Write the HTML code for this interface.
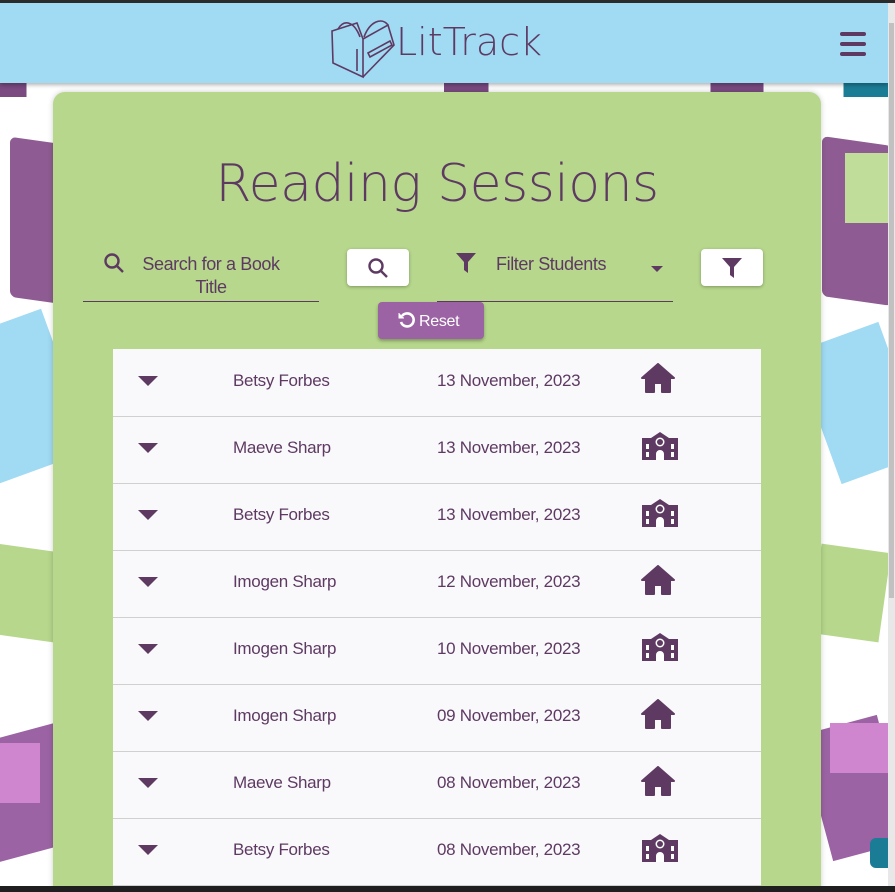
<!DOCTYPE html>
<html><head><style>
*{margin:0;padding:0;box-sizing:border-box}
body{width:895px;height:892px;overflow:hidden;background:#2b2b2b;font-family:"Liberation Sans",sans-serif;position:relative}
#page{position:absolute;left:0;top:3px;width:888px;height:883px;background:#fff;overflow:hidden}
#sb{position:absolute;left:888px;top:3px;width:7px;height:883px;background:#e8e8e8}
#sb div{position:absolute;left:1px;top:20px;width:5px;height:575px;background:#c1c1c1}
#bot{position:absolute;left:0;top:886px;width:895px;height:6px;background:#1f1f1f}
.bk{position:absolute}
header{position:absolute;left:0;top:0;width:888px;height:80px;background:#a0daf3;box-shadow:0 2px 4px rgba(0,0,0,.3);z-index:3}
.logo{position:absolute;left:396px;top:17px;font-size:38px;color:#5e3a63;font-family:"DejaVu Sans","Liberation Sans",sans-serif;font-weight:200}
.ham{position:absolute;left:840px;top:29px;width:26px}
.ham div{height:4px;background:#5e3a63;border-radius:2px;margin-bottom:6px}
.card{position:absolute;left:53px;top:89px;width:768px;height:820px;background:#b6d78c;border-radius:12px;z-index:2;box-shadow:0 0 6px rgba(0,0,0,.2)}
h1{position:absolute;left:0;width:768px;top:62px;text-align:center;font-size:52px;color:#5e3a63;font-family:"DejaVu Sans","Liberation Sans",sans-serif;font-weight:200;letter-spacing:-0.5px}
.t{color:#5e3a63;font-size:18px;position:absolute;letter-spacing:-0.4px}
.line{position:absolute;height:1px;background:#5e3a63}
.btn{position:absolute;background:#fff;border-radius:4px;box-shadow:0 1px 3px rgba(0,0,0,.3)}
.reset{position:absolute;left:325px;top:210px;width:106px;height:37px;background:#9b63a3;border-radius:4px;color:#fff;font-size:16px;box-shadow:0 2px 3px rgba(0,0,0,.3);letter-spacing:-0.3px}
table{position:absolute;left:60px;top:257px;width:648px;border-collapse:collapse;background:#f9f9fb}
td{height:67px;border-bottom:1px solid #d0d0d0;color:#5e3a63;font-size:17px;padding:0 0 3px 0;letter-spacing:-0.3px}
</style></head><body>
<div id="page">
<div class="bk" style="left:10px;top:138px;width:60px;height:160px;background:#8e5c92;transform:skew(0,8deg);border-radius:6px"></div>
<div class="bk" style="left:-40px;top:320px;width:110px;height:150px;background:#a0daf3;transform:rotate(-20deg)"></div>
<div class="bk" style="left:-10px;top:545px;width:70px;height:90px;background:#b6d78c;transform:rotate(8deg)"></div>
<div class="bk" style="left:-20px;top:730px;width:90px;height:120px;background:#9b63a3;transform:rotate(-15deg)"></div>
<div class="bk" style="left:-10px;top:740px;width:50px;height:60px;background:#cf86cf"></div>
<div class="bk" style="left:822px;top:138px;width:70px;height:160px;background:#8e5c92;transform:skew(0,8deg);border-radius:6px"></div>
<div class="bk" style="left:845px;top:150px;width:43px;height:70px;background:#c0dd9a"></div>
<div class="bk" style="left:815px;top:330px;width:90px;height:140px;background:#a0daf3;transform:rotate(-20deg)"></div>
<div class="bk" style="left:815px;top:545px;width:70px;height:90px;background:#b6d78c;transform:rotate(8deg)"></div>
<div class="bk" style="left:815px;top:720px;width:80px;height:130px;background:#9b63a3;transform:rotate(-15deg)"></div>
<div class="bk" style="left:830px;top:720px;width:58px;height:50px;background:#cf86cf"></div>
<div class="bk" style="left:870px;top:835px;width:30px;height:30px;background:#1b7c95;border-radius:6px"></div>
<div class="bk" style="left:0;top:80px;width:888px;height:14px;background:linear-gradient(90deg,#fff 0,#7a4a80 0 3%,#fff 3% 50%,#7a4a80 50% 55%,#fff 55% 80%,#7a4a80 80% 86%,#fff 86% 95%,#1b7c95 95%)"></div>

<header>
<svg style="position:absolute;left:330px;top:12px" width="66" height="64" viewBox="0 0 66 64" fill="none" stroke="#5e3a63" stroke-width="1.6">
<path d="M2 16 L27 8 L33 24 L33 62 L3 48 Z"/><path d="M33 24 L58 10 L64 30 L33 62"/><path d="M8 14 C14 4 24 6 30 22 M34 22 C40 6 52 2 58 10"/><path d="M27 34 V56 M38 38 L60 26 L62 30 L40 42 Z"/></svg>
<div class="logo">LitTrack</div>
<div class="ham"><div></div><div></div><div></div></div>
</header>

<div class="card">
<h1>Reading Sessions</h1>
<svg style="position:absolute;left:50px;top:160px" width="22" height="22" viewBox="0 0 22 22" fill="none" stroke="#5e3a63" stroke-width="2.4"><circle cx="9" cy="9" r="6.5"/><path d="M14 14 L20 20"/></svg>
<div class="t" style="left:88px;top:161px;width:140px;text-align:center;line-height:23px">Search for a Book Title</div>
<div class="line" style="left:30px;top:209px;width:236px"></div>
<div class="btn" style="left:294px;top:157px;width:62px;height:37px"><svg style="position:absolute;left:20px;top:8px" width="22" height="22" viewBox="0 0 22 22" fill="none" stroke="#5e3a63" stroke-width="2.4"><circle cx="9" cy="9" r="6.5"/><path d="M14 14 L20 20"/></svg></div>
<svg style="position:absolute;left:403px;top:161px" width="20" height="20" viewBox="0 0 20 20"><path d="M0 0 H20 L12 9 V20 L8 17 V9 Z" fill="#5e3a63"/></svg>
<div class="t" style="left:443px;top:162px">Filter Students</div>
<svg style="position:absolute;left:598px;top:174px" width="12" height="7"><path d="M0 0 H12 L6 6 Z" fill="#5e3a63"/></svg>
<div class="line" style="left:384px;top:209px;width:236px"></div>
<div class="btn" style="left:648px;top:157px;width:62px;height:37px"><svg style="position:absolute;left:21px;top:9px" width="20" height="20" viewBox="0 0 20 20"><path d="M0 0 H20 L12 9 V20 L8 17 V9 Z" fill="#5e3a63"/></svg></div>
<div class="reset"><svg style="position:absolute;left:20px;top:9px" width="18" height="18" viewBox="0 0 18 18" fill="none" stroke="#fff" stroke-width="2.6"><path d="M4 5 A6.5 6.5 0 1 1 3 11"/><path d="M1 2 V7 H6" fill="#fff" stroke-width="1"/></svg><span style="position:absolute;left:41px;top:11px">Reset</span></div>
<table>
<tbody>
</tbody></table>
</div>
</div>
<div id="sb"><div></div></div>
<div id="bot"></div>
<script>
var rows=[["Betsy Forbes","13 November, 2023",0],["Maeve Sharp","13 November, 2023",1],["Betsy Forbes","13 November, 2023",1],["Imogen Sharp","12 November, 2023",0],["Imogen Sharp","10 November, 2023",1],["Imogen Sharp","09 November, 2023",0],["Maeve Sharp","08 November, 2023",0],["Betsy Forbes","08 November, 2023",1]];
var house='<svg width="34" height="30" viewBox="0 0 34 30"><path d="M17 1 L33 15 H29 V29 H21 V20 H13 V29 H5 V15 H1 Z" fill="#5e3a63" stroke="#5e3a63" stroke-linejoin="round" stroke-width="2"/></svg>';
var school='<svg width="38" height="30" viewBox="0 0 38 30"><path d="M19 1 L28 7 H37 V29 H1 V7 H10 Z" fill="#5e3a63"/><circle cx="19" cy="11" r="4.5" fill="#fff"/><circle cx="19" cy="11" r="3" fill="#5e3a63"/><path d="M15 29 V23 A4 4 0 0 1 23 23 V29 Z M5 13 h3 v5 h-3z M30 13 h3 v5 h-3z M5 21 h3 v5 h-3z M30 21 h3 v5 h-3z" fill="#fff"/></svg>';
var h='';rows.forEach(function(r){h+='<tr><td style="width:120px;padding-left:25px"><svg width="20" height="10"><path d="M0 0 H20 L10 10 Z" fill="#5e3a63"/></svg></td><td style="width:204px">'+r[0]+'</td><td style="width:204px">'+r[1]+'</td><td>'+(r[2]?school:house)+'</td></tr>'});
document.querySelector('tbody').innerHTML=h;
</script>
</body></html>
